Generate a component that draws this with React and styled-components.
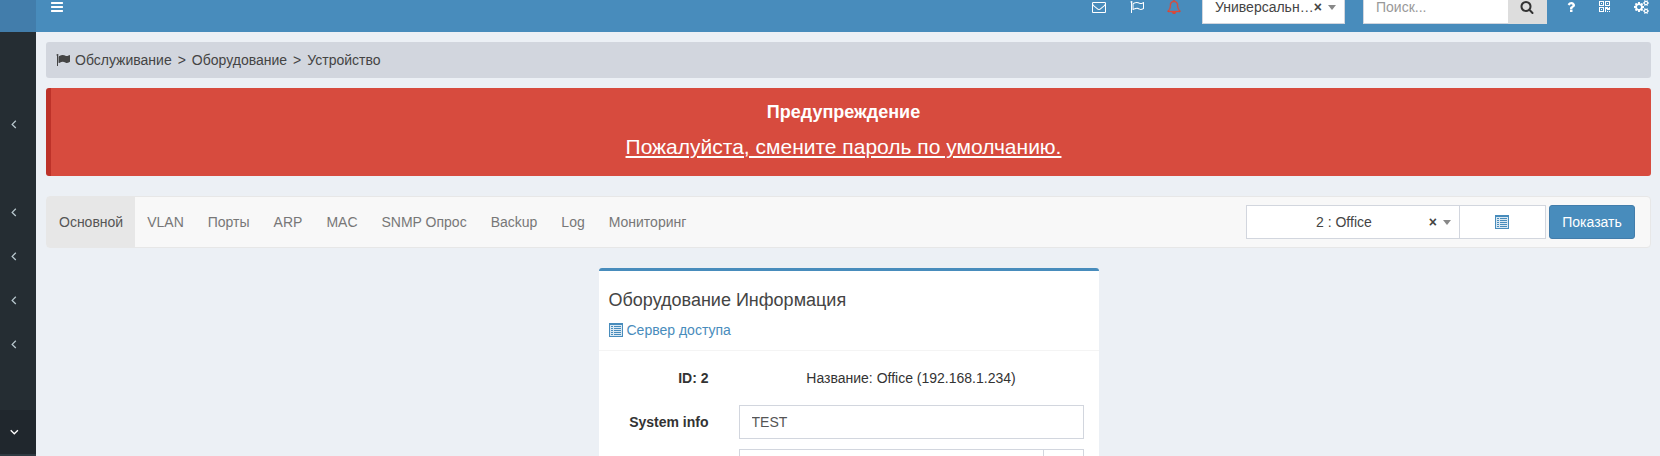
import React from 'react';
import styled, { createGlobalStyle, css } from 'styled-components';

const GlobalStyle = createGlobalStyle`
  *, *::before, *::after { box-sizing: border-box; }
  html, body, #root { height: 100%; }
  body {
    margin: 0;
    overflow: hidden;
    background: #ecf0f5;
    color: #333;
    font: 14px/20px "Liberation Sans", Arial, sans-serif;
  }
`;

const glyphs = {
  bars: [1792, 'M1664 1344v128q0 26-19 45t-45 19h-1408q-26 0-45-19t-19-45v-128q0-26 19-45t45-19h1408q26 0 45 19t19 45zm0-512v128q0 26-19 45t-45 19h-1408q-26 0-45-19t-19-45v-128q0-26 19-45t45-19h1408q26 0 45 19t19 45zm0-512v128q0 26-19 45t-45 19h-1408q-26 0-45-19t-19-45v-128q0-26 19-45t45-19h1408q26 0 45 19t19 45z'],
  envelope: [1792, 'M1664 1504v-768q-32 36-69 66-268 206-426 338-51 43-83 67t-86.5 48.5-102.5 24.5h-2q-48 0-102.5-24.5t-86.5-48.5-83-67q-158-132-426-338-37-30-69-66v768q0 13 9.5 22.5t22.5 9.5h1472q13 0 22.5-9.5t9.5-22.5zm0-1051v-24.5l-.5-13-3-12.5-5.5-9-9-7.5-14-2.5h-1472q-13 0-22.5 9.5t-9.5 22.5q0 168 147 284 193 152 401 317 6 5 35 29.5t46 37.5 44.5 31.5 50.5 27.5 43 9h2q20 0 43-9t50.5-27.5 44.5-31.5 46-37.5 35-29.5q208-165 401-317 54-43 100.5-115.5t46.5-131.5zm128-37v1088q0 66-47 113t-113 47h-1472q-66 0-113-47t-47-113v-1088q0-66 47-113t113-47h1472q66 0 113 47t47 113z'],
  flag: [1792, 'M320 256q0 72-64 110v1266q0 13-9.5 22.5t-22.5 9.5h-64q-13 0-22.5-9.5t-9.5-22.5v-1266q-64-38-64-110 0-53 37.5-90.5t90.5-37.5 90.5 37.5 37.5 90.5zm1472 64v763q0 25-12.5 38.5t-39.5 27.5q-215 116-369 116-61 0-123.5-22t-108.5-48-115.5-48-142.5-22q-192 0-464 146-17 9-33 9-26 0-45-19t-19-45v-742q0-32 31-55 21-14 79-43 236-120 421-120 107 0 200 29t219 88q38 19 88 19 54 0 117.5-21t110-47 88-47 54.5-21q26 0 45 19t19 45z'],
  flagOutline: [1792, 'M1664 1048v-616q-169 91-306 91-82 0-145-32-100-49-184-76.5t-178-27.5q-173 0-403 127v599q245-113 433-113 55 0 103.5 7.5t98 26 77 31 82.5 39.5l28 14q44 22 101 22 120 0 293-92zM320 256q0 72-64 110v1266q0 13-9.5 22.5t-22.5 9.5h-64q-13 0-22.5-9.5t-9.5-22.5v-1266q-64-38-64-110 0-53 37.5-90.5t90.5-37.5 90.5 37.5 37.5 90.5zm1472 64v763q0 39-35 57-10 5-17 9-218 116-369 116-88 0-158-35l-28-14q-64-33-99-48t-91-29-114-14q-102 0-235.5 44t-228.5 102q-15 9-33 9-16 0-32-8-32-19-32-56v-742q0-35 31-55 35-21 78.5-42.5t114-52 152.5-49.5 155-19q112 0 209 31t209 86q38 19 89 19 122 0 310-112 22-12 31-17 31-16 62 2 31 20 31 55z'],
  bell: [1792, 'M912 1696q0-16-16-16-59 0-101.5-42.5t-42.5-101.5q0-16-16-16t-16 16q0 73 51.5 124.5t124.5 51.5q16 0 16-16zm-666-288h1300q-266-300-266-832 0-51-24-105t-69-103-121.5-80.5-169.5-31.5-169.5 31.5-121.5 80.5-69 103-24 105q0 532-266 832zm1482 0q0 52-38 90t-90 38h-448q0 106-75 181t-181 75-181-75-75-181h-448q-52 0-90-38t-38-90q50-42 91-88t85-119.5 74.5-158.5 50-206 19.5-260q0-152 117-282.5t307-158.5q-8-19-8-39 0-40 28-68t68-28 68 28 28 68q0 20-8 39 190 28 307 158.5t117 282.5q0 139 19.5 260t50 206 74.5 158.5 85 119.5 91 88z'],
  search: [1792, 'M1216 832q0-185-131.5-316.5t-316.5-131.5-316.5 131.5-131.5 316.5 131.5 316.5 316.5 131.5 316.5-131.5 131.5-316.5zm512 832q0 52-38 90t-90 38q-54 0-90-38l-343-342q-179 124-399 124-143 0-273.5-55.5t-225-150-150-225-55.5-273.5 55.5-273.5 150-225 225-150 273.5-55.5 273.5 55.5 225 150 150 225 55.5 273.5q0 220-124 399l343 343q37 37 37 90z'],
  question: [1792, 'M1088 1256v240q0 16-12 28t-28 12h-240q-16 0-28-12t-12-28v-240q0-16 12-28t28-12h240q16 0 28 12t12 28zm316-600q0 54-15.5 101t-35 76.5-55 59.5-57.5 43.5-61 35.5q-41 23-68.5 65t-27.5 67q0 17-12 32.5t-28 15.5h-240q-15 0-25.5-18.5t-10.5-37.5v-45q0-83 65-156.5t143-108.5q59-27 84-56t25-76q0-42-46.5-74t-107.5-32q-65 0-108 29-35 25-107 115-13 16-31 16-12 0-25-8l-164-125q-13-10-15.5-25t5.5-28q160-266 464-266 80 0 161 31t146 83 106 127.5 41 158.5z'],
  qrcode: [1408, 'M384 1152v128H256v-128zm0-768v128H256V384zm768 0v128h-128V384zM128 1407h384v-383H128zm0-767h384V256H128zm768 0h384V256H896zM640 896v640H0V896zm512 512v128h-128v-128zm256 0v128h-128v-128zm0-512v384h-384v-128H896v384H768V896h384v128h128V896zM640 128v640H0V128zm768 0v640H768V128z'],
  cogs: [1920, 'M896 896q0-106-75-181t-181-75-181 75-75 181 75 181 181 75 181-75 75-181zm768 512q0-52-38-90t-90-38-90 38-38 90q0 53 37.5 90.5t90.5 37.5 90.5-37.5 37.5-90.5zm0-1024q0-52-38-90t-90-38-90 38-38 90q0 53 37.5 90.5t90.5 37.5 90.5-37.5 37.5-90.5zm-384 421v185q0 10-7 19.5t-16 10.5l-155 24q-11 35-32 76 34 48 90 115 7 11 7 20 0 12-7 19-23 30-82.5 89.5t-78.5 59.5q-11 0-21-7l-115-90q-37 19-77 31-11 108-23 155-7 24-30 24h-186q-11 0-20-7.5t-10-17.5l-23-153q-34-10-75-31l-118 89q-7 7-20 7-11 0-21-8-144-133-144-160 0-9 7-19 10-14 41-53t47-61q-23-44-35-82l-152-24q-10-1-17-9.5t-7-19.5v-185q0-10 7-19.5t16-10.5l155-24q11-35 32-76-34-48-90-115-7-11-7-20 0-12 7-20 22-30 82-89t79-59q11 0 21 7l115 90q34-18 77-32 11-108 23-154 7-24 30-24h186q11 0 20 7.5t10 17.5l23 153q34 10 75 31l118-89q8-7 20-7 11 0 21 8 144 133 144 160 0 8-7 19-12 16-42 54t-45 60q23 48 34 82l152 23q10 2 17 10.5t7 19.5zm640 533v140q0 16-149 31-12 27-30 52 51 113 51 138 0 4-4 7-122 71-124 71-8 0-46-47t-52-68q-20 2-30 2t-30-2q-14 21-52 68t-46 47q-2 0-124-71-4-3-4-7 0-25 51-138-18-25-30-52-149-15-149-31v-140q0-16 149-31 13-29 30-52-51-113-51-138 0-4 4-7 4-2 35-20t59-34 30-16q8 0 46 46.5t52 67.5q20-2 30-2t30 2q51-71 92-112l6-2q4 0 124 70 4 3 4 7 0 25-51 138 17 23 30 52 149 15 149 31zm0-1024v140q0 16-149 31-12 27-30 52 51 113 51 138 0 4-4 7-122 71-124 71-8 0-46-47t-52-68q-20 2-30 2t-30-2q-14 21-52 68t-46 47q-2 0-124-71-4-3-4-7 0-25 51-138-18-25-30-52-149-15-149-31v-140q0-16 149-31 13-29 30-52-51-113-51-138 0-4 4-7 4-2 35-20t59-34 30-16q8 0 46 46.5t52 67.5q20-2 30-2t30 2q51-71 92-112l6-2q4 0 124 70 4 3 4 7 0 25-51 138 17 23 30 52 149 15 149 31z'],
};

const Svg = styled.svg`
  display: block;
  flex: none;
  fill: currentColor;
  stroke: currentColor;
  stroke-width: ${({ $weight }) => $weight || 0};
`;

function Icon({ name, size = 14, weight }) {
  const [width, d] = glyphs[name];
  return (
    <Svg $weight={weight} width={(width / 1792) * size} height={size} viewBox={`0 0 ${width} 1792`} aria-hidden="true">
      <path d={d} fillRule="evenodd" />
    </Svg>
  );
}

function ListIcon() {
  return (
    <Svg width="14" height="14" viewBox="0 0 14 14" aria-hidden="true">
      <path fillRule="evenodd" d="M0 0h14v14H0zM1 2v11h12V2z" />
      <path d="M1 2h12v11H1z" opacity=".2" />
      <path d="M2 3h2v1H2zM5 3h7v1H5zM2 5h2v1H2zM5 5h7v1H5zM2 7h2v1H2zM5 7h7v1H5zM2 9h2v1H2zM5 9h7v1H5zM2 11h2v1H2zM5 11h7v1H5z" />
    </Svg>
  );
}

const Page = styled.div`
  display: flex;
  flex-direction: column;
  height: 100%;
`;

/* The page is scrolled a little, so the top of the header is cut off. */
const Header = styled.header`
  display: flex;
  flex: none;
  height: 50px;
  margin-top: -18px;
  background: #488cbc;
  color: #fff;
`;

const Logo = styled.div`
  width: 36px;
  background: #427dab;
`;

const TopBar = styled.nav`
  display: flex;
  flex: 1;
  align-items: center;
  padding: 0 2px 0 14px;
`;

const TopLink = styled.a`
  display: flex;
  justify-content: center;
  width: ${({ $width }) => $width}px;
  color: ${({ $alert }) => ($alert ? '#dd4b39' : '#fff')};
`;

const Push = styled.span`
  flex: 1;
`;

const Select = styled.div`
  display: flex;
  align-items: center;
  width: ${({ $width }) => $width}px;
  height: 34px;
  padding: 0 8px 0 12px;
  border: 1px solid #d2d6de;
  background: #fff;
  color: #444;
`;

const TopSelect = styled(Select)`
  margin-left: 10px;
`;

const SelectLabel = styled.span`
  flex: 1;
  white-space: nowrap;
  text-align: ${({ $centered }) => ($centered ? 'center' : 'left')};
`;

const Clear = styled.b`
  margin-right: 6px;
`;

const Caret = styled.i`
  border: 4px solid transparent;
  border-top: 5px solid #888;
  border-bottom: 0;
`;

const Search = styled.form`
  display: flex;
  width: 184px;
  height: 34px;
  margin: 0 10px 0 18px;
`;

const SearchInput = styled.input`
  width: 145px;
  padding: 6px 12px;
  border: 1px solid #d2d6de;
  border-right: 0;
  border-radius: 0;
  font: inherit;
  &::placeholder { color: #999; opacity: 1; }
`;

const SearchButton = styled.button`
  display: flex;
  align-items: center;
  justify-content: center;
  width: 39px;
  padding: 0 1px 0 0;
  border: 0;
  background: #ddd;
  color: #333;
`;

const Body = styled.div`
  display: flex;
  flex: 1;
  min-height: 0;
`;

const Sidebar = styled.aside`
  display: flex;
  flex-direction: column;
  width: 36px;
  padding-top: 70px;
  overflow: hidden;
  background: #252d33;
  color: #b8c7ce;
`;

const MenuItem = styled.div`
  display: flex;
  flex: none;
  align-items: center;
  height: 44px;
  padding-left: 10px;
  ${({ $open }) => $open && css`
    background: #20272d;
    color: #fff;
  `}
`;

const SubMenu = styled.div`
  flex: 1;
  background: #2e3a42;
`;

const MenuGap = styled.div`
  flex: none;
  height: 44px;
`;

const Stroke = styled.svg`
  fill: none;
  stroke: currentColor;
  stroke-width: 1.3;
`;

const Content = styled.main`
  display: flex;
  flex: 1;
  flex-direction: column;
  align-items: stretch;
  padding: 10px 9px 0 10px;
`;

const Breadcrumb = styled.div`
  display: flex;
  flex: none;
  align-items: center;
  gap: 6px;
  height: 36px;
  padding: 0 10px;
  border-radius: 3px;
  background: #d2d6de;
  color: #444;
`;

const Crumb = styled.a`
  color: #444;
  &:first-of-type { margin-left: -1px; }
`;

const Alert = styled.section`
  flex: none;
  height: 88px;
  margin: 10px 0 20px;
  padding: 14px 30px 15px 15px;
  border-left: 5px solid #bd3229;
  border-radius: 3px;
  background: #d74b3e;
  color: #fff;
  text-align: center;
`;

const AlertTitle = styled.h4`
  margin: 0 0 12px;
  font-size: 18px;
  line-height: 20px;
`;

const AlertLink = styled.a`
  display: block;
  font-size: 21px;
  line-height: 26px;
  text-decoration: underline;
`;

const Toolbar = styled.nav`
  display: flex;
  flex: none;
  align-items: center;
  height: 52px;
  margin-bottom: 20px;
  padding-right: 15px;
  border: 1px solid #e7e7e7;
  border-radius: 4px;
  background: #f8f8f8;
`;

const Tab = styled.a`
  padding: 15px 12px;
  color: ${({ $active }) => ($active ? '#555' : '#777')};
  background: ${({ $active }) => ($active ? '#e7e7e7' : 'transparent')};
`;

const Addon = styled.span`
  display: flex;
  align-items: center;
  justify-content: center;
  width: 87px;
  height: 34px;
  margin: 0 3px 0 -1px;
  padding-right: 1px;
  border: 1px solid #d2d6de;
  background: #fff;
  color: #488cbc;
`;

const Button = styled.button`
  width: 86px;
  height: 34px;
  padding: 0;
  border: 1px solid #427dab;
  border-radius: 3px;
  background: #488cbc;
  color: #fff;
  font: inherit;
`;

const Box = styled.section`
  align-self: center;
  flex: 1;
  width: 500px;
  min-height: 0;
  overflow: hidden;
  border-top: 3px solid #488cbc;
  border-radius: 3px 3px 0 0;
  background: #fff;
`;

const BoxHeader = styled.header`
  height: 80px;
  padding: 19px 10px 0;
  border-bottom: 1px solid #f4f4f4;
`;

const BoxTitle = styled.h4`
  margin: 0 0 10px;
  color: #444;
  font-size: 18px;
  font-weight: 400;
  line-height: 20px;
`;

const BoxLink = styled.a`
  display: flex;
  align-items: center;
  gap: 4px;
  color: #488cbc;
`;

const FormRow = styled.div`
  display: grid;
  grid-template-columns: 110px 345px;
  column-gap: 30px;
  align-items: center;
  height: 34px;
  margin-bottom: 10px;
  &:first-of-type { margin-top: 10px; }
`;

const Label = styled.label`
  font-weight: 700;
  text-align: right;
`;

const Value = styled.span`
  text-align: center;
`;

const Field = styled.input`
  width: 100%;
  min-width: 0;
  height: 34px;
  padding: 6px 12px;
  border: 1px solid #d2d6de;
  border-radius: 0;
  background: #fff;
  color: #555;
  font: inherit;
`;

const FieldGroup = styled.div`
  display: grid;
  grid-template-columns: 1fr 40px;
`;

const FieldAddon = styled.span`
  border: 1px solid #d2d6de;
  border-left: 0;
`;

function Chevron({ down }) {
  return (
    <Stroke width="9" height="9" viewBox="0 0 9 9">
      <path d={down ? 'M.7 2.3 4.3 5.8 7.9 2.3' : 'M5.8 .8 2.2 4.4l3.6 3.6'} />
    </Stroke>
  );
}

const tabs = ['Основной', 'VLAN', 'Порты', 'ARP', 'MAC', 'SNMP Опрос', 'Backup', 'Log', 'Мониторинг'];

export default function App() {
  return (
    <Page>
      <GlobalStyle />
      <Header>
        <Logo />
        <TopBar>
          <TopLink $width={14}><Icon name="bars" /></TopLink>
          <Push />
          <TopLink $width={39}><Icon name="envelope" /></TopLink>
          <TopLink $width={38}><Icon name="flagOutline" /></TopLink>
          <TopLink $width={36} $alert><Icon name="bell" weight={50} /></TopLink>
          <TopSelect $width={143}>
            <SelectLabel>Универсальн…</SelectLabel>
            <Clear>×</Clear>
            <Caret />
          </TopSelect>
          <Search>
            <SearchInput placeholder="Поиск..." />
            <SearchButton type="button"><Icon name="search" /></SearchButton>
          </Search>
          <TopLink $width={27}><Icon name="question" /></TopLink>
          <TopLink $width={40}><Icon name="qrcode" /></TopLink>
          <TopLink $width={34}><Icon name="cogs" /></TopLink>
        </TopBar>
      </Header>
      <Body>
        <Sidebar>
          <MenuItem><Chevron /></MenuItem>
          <MenuGap />
          <MenuItem><Chevron /></MenuItem>
          <MenuItem><Chevron /></MenuItem>
          <MenuItem><Chevron /></MenuItem>
          <MenuItem><Chevron /></MenuItem>
          <MenuGap />
          <MenuItem $open><Chevron down /></MenuItem>
          <SubMenu />
        </Sidebar>
        <Content>
          <Breadcrumb>
            <Icon name="flag" />
            <Crumb>Обслуживание</Crumb>
            <span>&gt;</span>
            <Crumb>Оборудование</Crumb>
            <span>&gt;</span>
            <Crumb>Устройство</Crumb>
          </Breadcrumb>
          <Alert>
            <AlertTitle>Предупреждение</AlertTitle>
            <AlertLink>Пожалуйста, смените пароль по умолчанию.</AlertLink>
          </Alert>
          <Toolbar>
            {tabs.map((tab, i) => <Tab key={tab} $active={i === 0}>{tab}</Tab>)}
            <Push />
            <Select $width={214}>
              <SelectLabel $centered>2 : Office</SelectLabel>
              <Clear>×</Clear>
              <Caret />
            </Select>
            <Addon><ListIcon /></Addon>
            <Button>Показать</Button>
          </Toolbar>
          <Box>
            <BoxHeader>
              <BoxTitle>Оборудование Информация</BoxTitle>
              <BoxLink><ListIcon />Сервер доступа</BoxLink>
            </BoxHeader>
            <FormRow>
              <Label>ID: 2</Label>
              <Value>Название: Office (192.168.1.234)</Value>
            </FormRow>
            <FormRow>
              <Label>System info</Label>
              <Field defaultValue="TEST" />
            </FormRow>
            <FormRow>
              <span />
              <FieldGroup>
                <Field />
                <FieldAddon />
              </FieldGroup>
            </FormRow>
          </Box>
        </Content>
      </Body>
    </Page>
  );
}
